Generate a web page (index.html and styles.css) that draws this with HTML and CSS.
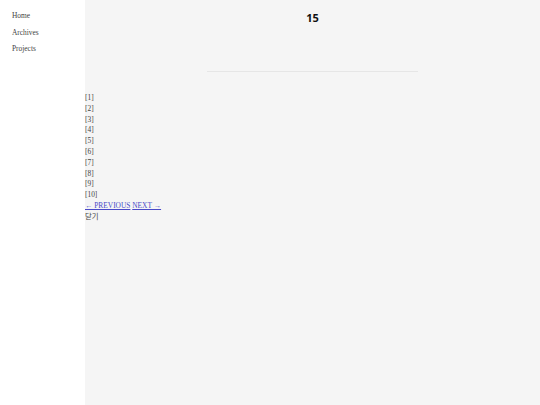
FILE: index.html
```html
<!DOCTYPE html>
<html>
<head>
<meta charset="utf-8">
<link rel="stylesheet" href="styles.css">
</head>
<body>
<div class="layout">
  <nav class="sidebar">
    <a class="nav-item">Home</a>
    <a class="nav-item">Archives</a>
    <a class="nav-item">Projects</a>
  </nav>
  <main class="main">
    <h1 class="title">15</h1>
    <hr class="divider">
    <div class="list">
      <div>[1]</div>
      <div>[2]</div>
      <div>[3]</div>
      <div>[4]</div>
      <div>[5]</div>
      <div>[6]</div>
      <div>[7]</div>
      <div>[8]</div>
      <div>[9]</div>
      <div>[10]</div>
      <div><a class="link" href="#">← PREVIOUS</a> <a class="link" href="#">NEXT →</a></div>
      <div>닫기</div>
    </div>
  </main>
</div>
</body>
</html>
```
FILE: styles.css
```css
html, body {
  margin: 0;
  padding: 0;
  height: 100%;
}
body {
  font-family: "Liberation Serif", "Noto Sans CJK KR", serif;
  color: #444;
}
.layout {
  display: flex;
  min-height: 100%;
}
.sidebar {
  width: 85px;
  flex: none;
  background: #fff;
  display: flex;
  flex-direction: column;
  gap: 5.5px;
  padding: 10px 0 0 12px;
  box-sizing: border-box;
  font-size: 7.4px;
}
.nav-item {
  line-height: 11px;
  color: #444;
}
.main {
  flex: 1;
  background: #f5f5f5;
  font-size: 7.4px;
  line-height: 10.8px;
}
.title {
  margin: 10px 0 0;
  text-align: center;
  font-family: "Open Sans", sans-serif;
  font-size: 11px;
  line-height: 16px;
  font-weight: 700;
  color: #111;
}
.divider {
  width: 211px;
  margin: 45px auto 21px;
  border: 0;
  border-top: 1px solid #e6e6e6;
  height: 0;
}
.list {
  color: #444;
}
.link {
  color: #4a4ac8;
}
```
